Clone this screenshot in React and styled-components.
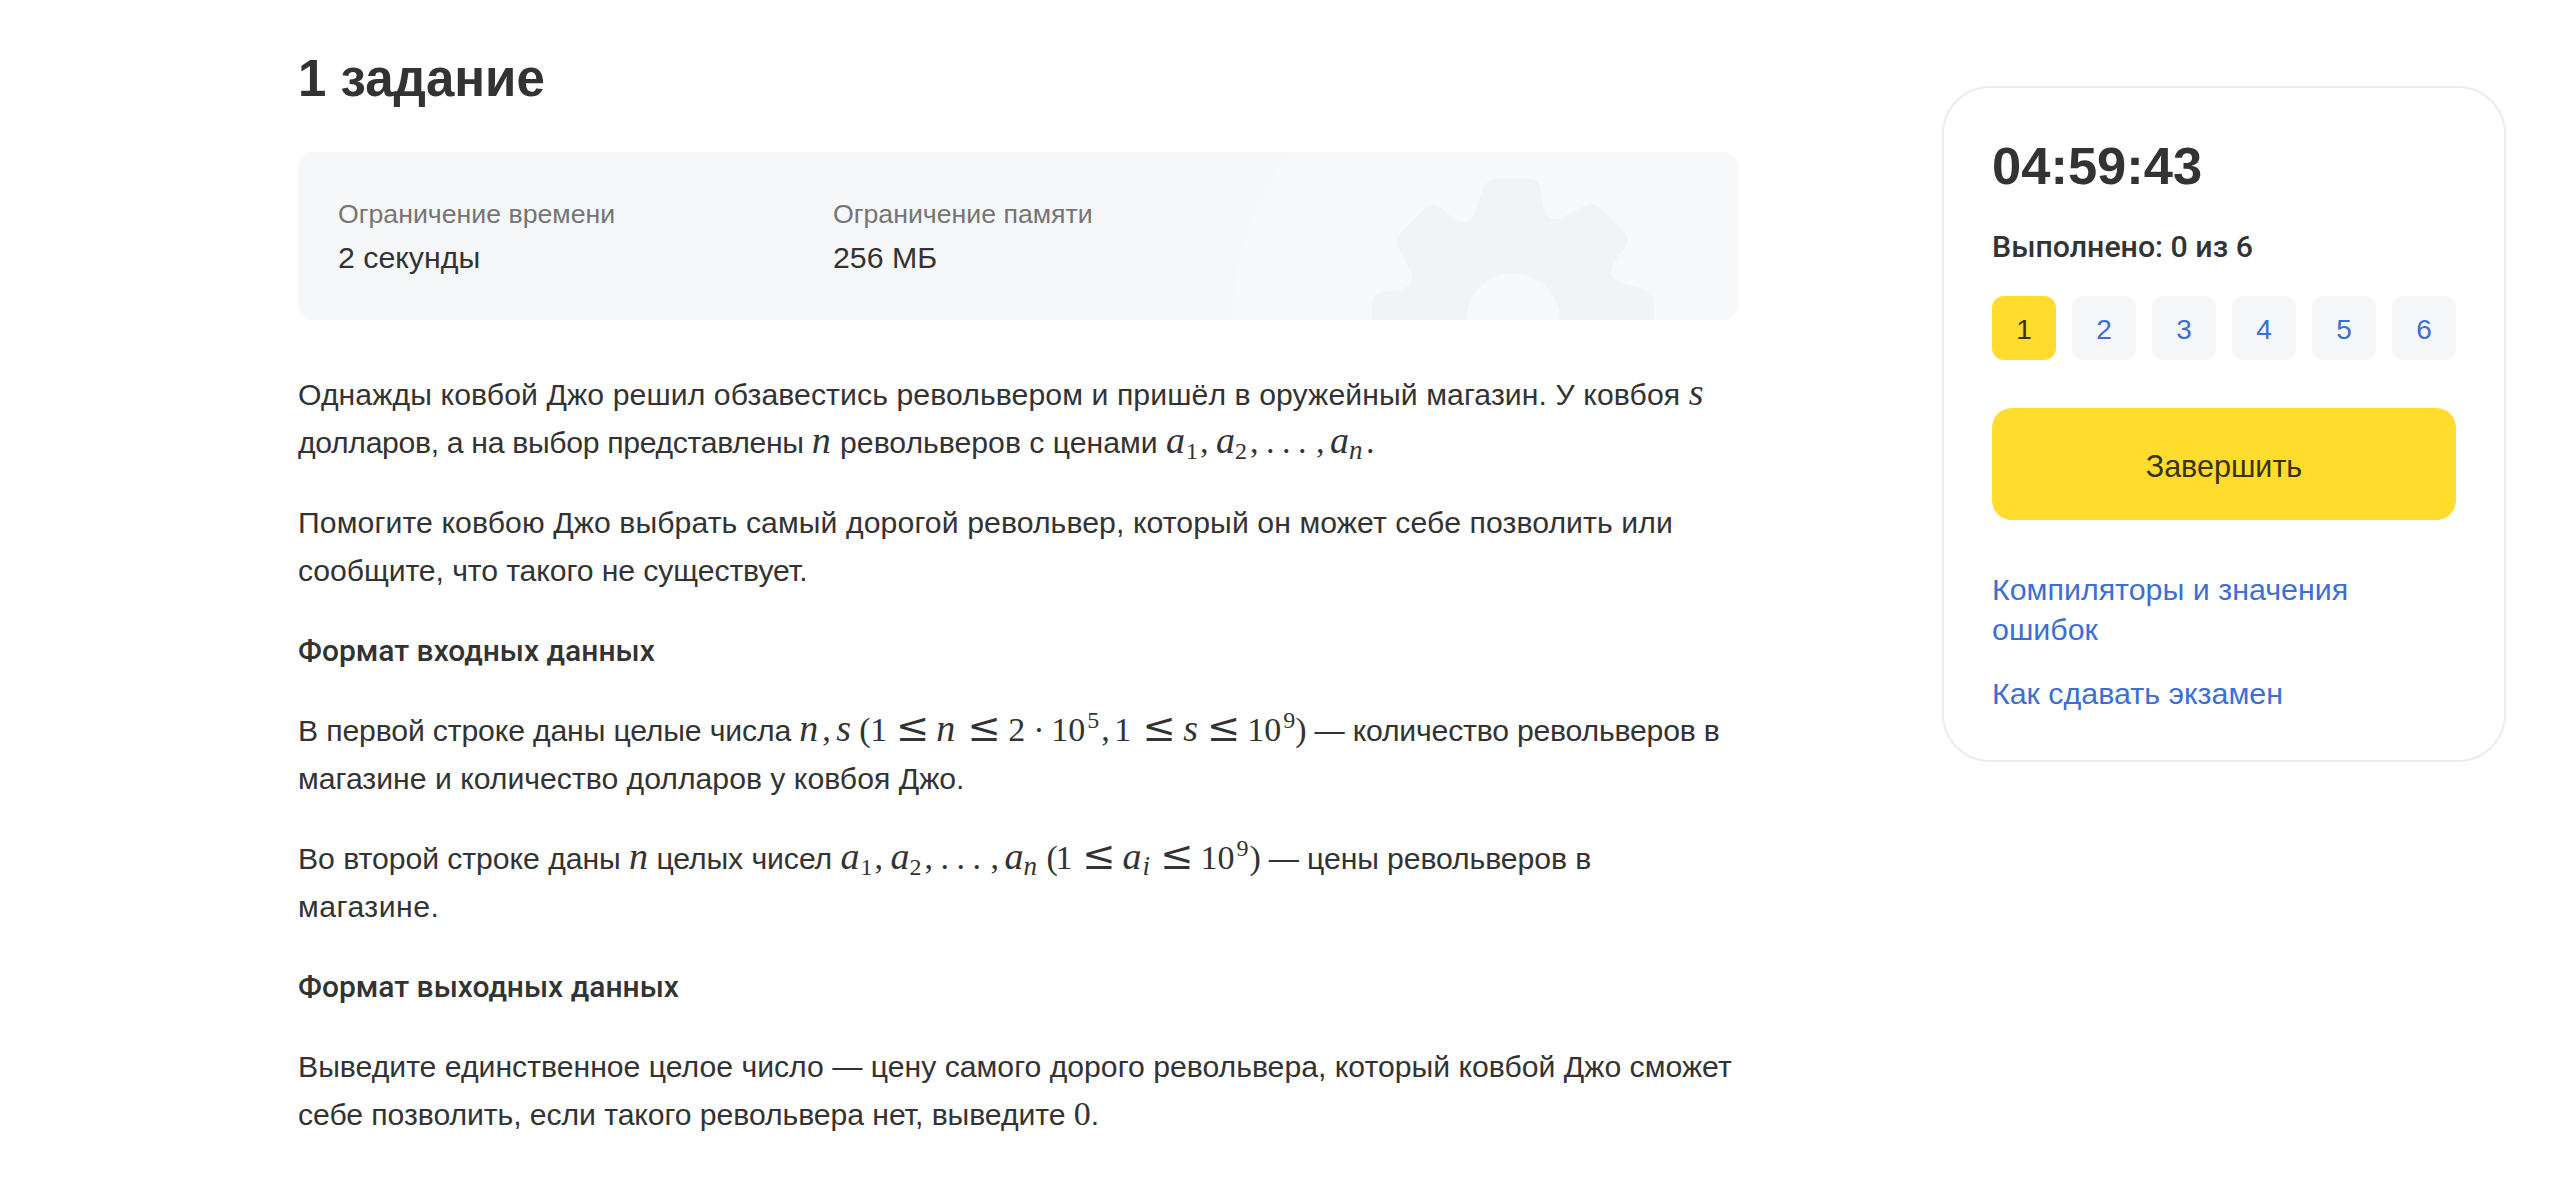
import React from "react";
import styled, { createGlobalStyle } from "styled-components";

const Global = createGlobalStyle`
  html, body { margin: 0; padding: 0; background: #fff; }
  body { height: 1180px; overflow: hidden; font-family: "Liberation Sans", Arial, sans-serif; color: #333; }
`;

const Page = styled.div`
  display: flex;
  align-items: flex-start;
  padding-left: 298px;
  width: 2552px;
  height: 1180px;
  box-sizing: border-box;
  overflow: hidden;
`;
const Main = styled.main`
  width: 1440px;
  flex: none;
  padding-top: 49px;
`;
const Title = styled.h1`
  margin: 0 0 43px;
  font-size: 51px;
  line-height: 60px;
  font-weight: 700;
  color: #333;
`;
const Limits = styled.section`
  position: relative;
  height: 168px;
  box-sizing: border-box;
  padding: 43px 40px 0;
  border-radius: 16px;
  background: #f6f7f9;
  overflow: hidden;
  display: flex;
  margin-bottom: 51px;
`;
const Gear = styled.svg`
  position: absolute;
  right: 0;
  top: 0;
`;
const Limit = styled.div`
  position: relative;
  width: 495px;
`;
const LimitLabel = styled.div`
  font-size: 26.7px;
  line-height: 38px;
  color: #757575;
`;
const LimitValue = styled.div`
  font-size: 30.3px;
  line-height: 49px;
  color: #333;
`;
const Para = styled.p`
  margin: 0 0 32px;
  font-size: 30.2px;
  line-height: 48px;
  color: #333;
  white-space: nowrap;
`;
const Run = styled.span`
  letter-spacing: ${(p) => p.$ls || 0}px;
`;
const Heading = styled.p`
  margin: 0 0 32px;
  font-family: Roboto, sans-serif;
  font-size: 30px;
  font-weight: 500;
  line-height: 48px;
  color: #333;
`;
const Atom = styled.span`
  display: inline-block;
  width: ${(p) => p.$w}px;
  font-family: "Liberation Serif", serif;
  font-size: ${(p) => (p.$it ? 38 : 34)}px;
  font-style: ${(p) => (p.$it ? "italic" : "normal")};
  line-height: 0;
  white-space: nowrap;
`;
const Rel = styled.span`
  display: inline-block;
  width: ${(p) => p.$w}px;
  margin: 0 6px 0 -6px;
  text-align: center;
  font-family: "DejaVu Serif", serif;
  font-size: 40px;
  line-height: 0;
`;
const Script = styled.span`
  display: inline-block;
  width: ${(p) => p.$w}px;
  font-family: "Liberation Serif", serif;
  font-size: ${(p) => (p.$it ? 27 : 24)}px;
  font-style: ${(p) => (p.$it ? "italic" : "normal")};
  line-height: 0;
  position: relative;
  top: ${(p) => (p.$up ? -13 : 6)}px;
`;
const Side = styled.aside`
  flex: none;
  width: 564px;
  margin: 86px 0 0 204px;
  box-sizing: border-box;
  height: 676px;
  border: 2px solid #ececee;
  border-radius: 48px;
  padding: 47px 48px 0;
`;
const Timer = styled.div`
  font-size: 52.5px;
  line-height: 62px;
  font-weight: 700;
  color: #333;
  margin-bottom: 26px;
`;
const Done = styled.div`
  font-family: Roboto, sans-serif;
  font-size: 30.3px;
  line-height: 48px;
  font-weight: 500;
  color: #333;
  margin-bottom: 25px;
`;
const Tiles = styled.div`
  display: flex;
  gap: 16px;
  margin-bottom: 48px;
`;
const Tile = styled.div`
  width: 64px;
  height: 64px;
  box-sizing: border-box;
  padding-top: 3px;
  border-radius: 12px;
  display: flex;
  align-items: center;
  justify-content: center;
  font-size: 28px;
  background: ${(p) => (p.$active ? "#ffdc2e" : "#f5f6f8")};
  color: ${(p) => (p.$active ? "#3a3208" : "#3c6fd4")};
`;
const Finish = styled.button`
  display: block;
  width: 464px;
  height: 112px;
  border: 0;
  padding: 4px 0 0;
  border-radius: 20px;
  background: #ffdc2e;
  color: #3a3208;
  font: 400 30.5px "Liberation Sans", sans-serif;
  margin-bottom: 49px;
`;
const LinkItem = styled.a`
  display: block;
  font-size: 30.4px;
  line-height: 40px;
  color: #3c6fd4;
  margin-bottom: 24px;
`;

const toothPts = [[-27, 141], [27, 141], [30, 110], [40, 98]];
function gearPath(cx, cy) {
  const pts = [];
  for (let k = 0; k < 8; k++) {
    const a = (k * Math.PI) / 4;
    toothPts.forEach(([x, y]) => {
      pts.push([cx + x * Math.cos(a) + y * Math.sin(a), cy + x * Math.sin(a) - y * Math.cos(a)]);
    });
  }
  const d = 11;
  let s = "";
  pts.forEach((p, i) => {
    const prev = pts[(i + pts.length - 1) % pts.length];
    const next = pts[(i + 1) % pts.length];
    const cut = (a, b) => {
      const l = Math.hypot(a[0] - b[0], a[1] - b[1]);
      const t = Math.min(d, l / 2) / l;
      return [a[0] + (b[0] - a[0]) * t, a[1] + (b[1] - a[1]) * t];
    };
    const p1 = cut(p, prev);
    const p2 = cut(p, next);
    s += `${i ? "L" : "M"}${p1[0].toFixed(1)} ${p1[1].toFixed(1)}Q${p[0].toFixed(1)} ${p[1].toFixed(1)} ${p2[0].toFixed(1)} ${p2[1].toFixed(1)}`;
  });
  return s + "Z";
}

const GearArt = () => (
  <Gear width="520" height="168" viewBox="0 0 520 168">
    <circle cx="295" cy="168" r="280" fill="#f7f8fa" />
    <path d={gearPath(295, 168)} fill="#f2f3f5" />
    <circle cx="295" cy="168" r="47" fill="#f7f8fa" />
  </Gear>
);

const Seq = ({ last }) => (
  <>
    <Atom $it $w={20}>a</Atom>
    <Script $w={14}>1</Script>
    <Atom $w={16}>,</Atom>
    <Atom $it $w={19}>a</Atom>
    <Script $w={15}>2</Script>
    <Atom $w={16}>,</Atom>
    <Atom $w={16}>.</Atom>
    <Atom $w={16}>.</Atom>
    <Atom $w={18}>.</Atom>
    <Atom $w={14}>,</Atom>
    <Atom $it $w={19}>a</Atom>
    <Script $it $w={last}>n</Script>
  </>
);

export default function App() {
  return (
    <Page>
      <Global />
      <Main>
        <Title>1 задание</Title>
        <Limits>
          <GearArt />
          <Limit>
            <LimitLabel>Ограничение времени</LimitLabel>
            <LimitValue>2 секунды</LimitValue>
          </Limit>
          <Limit>
            <LimitLabel>Ограничение памяти</LimitLabel>
            <LimitValue>256 МБ</LimitValue>
          </Limit>
        </Limits>
        <Para>
          <Run $ls={0.09}>Однажды ковбой Джо решил обзавестись револьвером и пришёл в оружейный магазин. У ковбоя </Run>
          <Atom $it $w={16}>s</Atom>
          <br />
          <Run $ls={-0.33}>долларов, а на выбор представлены </Run>
          <Atom $it $w={20}>n</Atom> револьверов с ценами <Seq last={17} />
          <Atom $w={9}>.</Atom>
        </Para>
        <Para>
          <Run $ls={0.09}>Помогите ковбою Джо выбрать самый дорогой револьвер, который он может себе позволить или</Run>
          <br />
          <Run $ls={-0.09}>сообщите, что такого не существует.</Run>
        </Para>
        <Heading>Формат входных данных</Heading>
        <Para>
          <Run $ls={-0.15}>В первой строке даны целые числа </Run>
          <Atom $it $w={23}>n</Atom>
          <Atom $w={14}>,</Atom>
          <Atom $it $w={23}>s</Atom>
          <Atom $w={11}>(</Atom>
          <Atom $w={31}>1</Atom>
          <Rel $w={35}>≤</Rel>
          <Atom $it $w={36}>n</Atom>
          <Rel $w={36}>≤</Rel>
          <Atom $w={25}>2</Atom>
          <Atom $w={18}>·</Atom>
          <Atom $w={36}>10</Atom>
          <Script $up $w={14}>5</Script>
          <Atom $w={13}>,</Atom>
          <Atom $w={33}>1</Atom>
          <Rel $w={36}>≤</Rel>
          <Atom $it $w={29}>s</Atom>
          <Rel $w={35}>≤</Rel>
          <Atom $w={36}>10</Atom>
          <Script $up $w={12}>9</Script>
          <Atom $w={11}>)</Atom>
          <Run $ls={-0.2}> — количество револьверов в</Run>
          <br />
          магазине и количество долларов у ковбоя Джо.
        </Para>
        <Para>
          <Run $ls={-0.05}>Во второй строке даны </Run>
          <Atom $it $w={19}>n</Atom>
          <Run $ls={-0.08}> целых чисел </Run>
          <Seq last={23} />
          <Atom $w={9}>(</Atom>
          <Atom $w={32}>1</Atom>
          <Rel $w={35}>≤</Rel>
          <Atom $it $w={20}>a</Atom>
          <Script $it $w={23}>i</Script>
          <Rel $w={35}>≤</Rel>
          <Atom $w={36}>10</Atom>
          <Script $up $w={13}>9</Script>
          <Atom $w={11}>)</Atom>
          <Run $ls={-0.1}> — цены револьверов в</Run>
          <br />
          <Run $ls={0.5}>магазине.</Run>
        </Para>
        <Heading>Формат выходных данных</Heading>
        <Para>
          Выведите единственное целое число — цену самого дорого револьвера, который ковбой Джо сможет
          <br />
          <Run $ls={-0.07}>себе позволить, если такого револьвера нет, выведите </Run>
          <Atom $w={17}>0</Atom>.
        </Para>
      </Main>
      <Side>
        <Timer>04:59:43</Timer>
        <Done>Выполнено: 0 из 6</Done>
        <Tiles>
          {[1, 2, 3, 4, 5, 6].map((n) => (
            <Tile key={n} $active={n === 1}>{n}</Tile>
          ))}
        </Tiles>
        <Finish>Завершить</Finish>
        <LinkItem>Компиляторы и значения<br />ошибок</LinkItem>
        <LinkItem>Как сдавать экзамен</LinkItem>
      </Side>
    </Page>
  );
}
